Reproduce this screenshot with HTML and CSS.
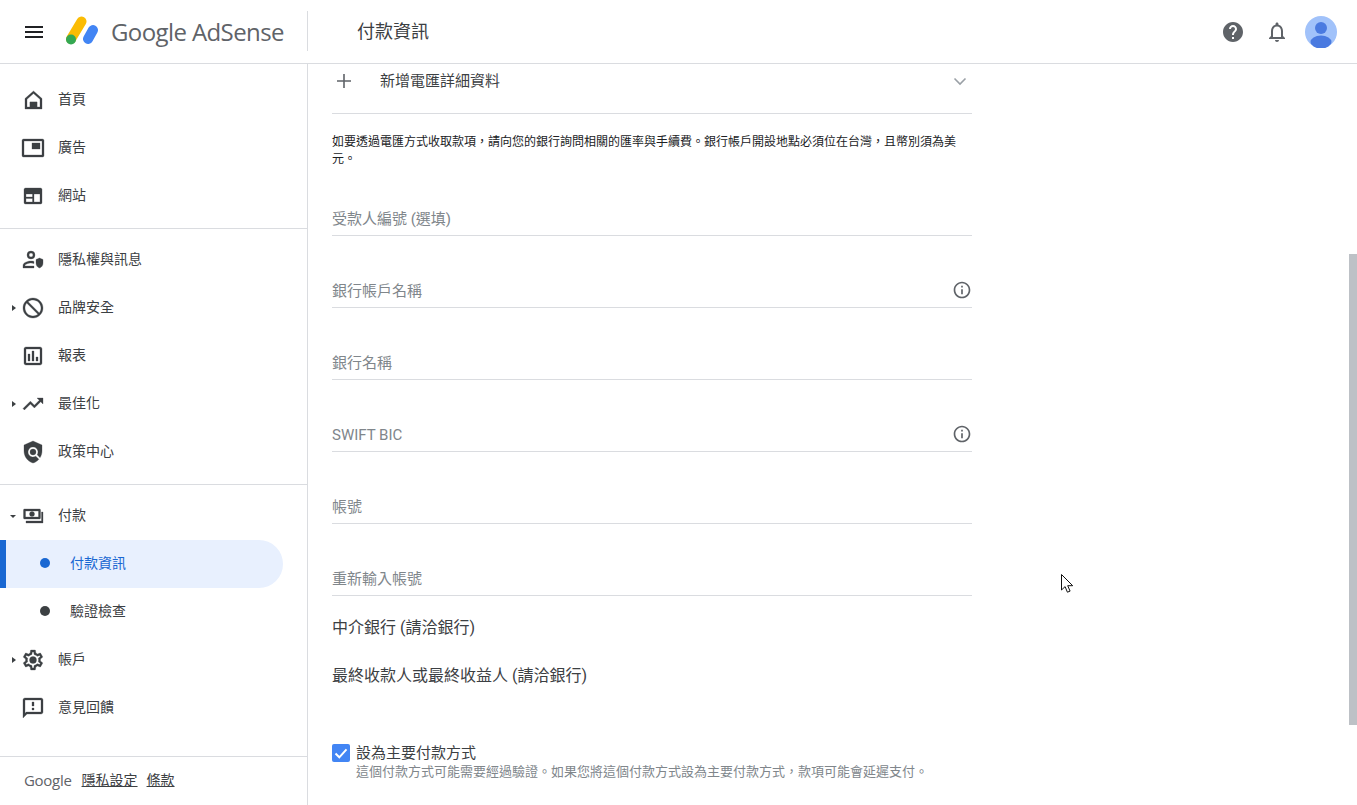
FILE: index.html
```html
<!DOCTYPE html>
<html lang="zh-Hant">
<head>
<meta charset="utf-8">
<title>付款資訊 - Google AdSense</title>
<link rel="stylesheet" href="styles.css">
</head>
<body>
<header class="topbar">
  <svg class="menu-icon" viewBox="0 0 24 24"><path d="M3 18h18v-2H3v2zm0-5h18v-2H3v2zm0-7v2h18V6H3z"/></svg>
  <svg class="logo-mark" viewBox="0 0 34 32">
    <line x1="16.5" y1="6.5" x2="6" y2="24" stroke="#fbbc04" stroke-width="10" stroke-linecap="round"/>
    <line x1="28" y1="15" x2="23" y2="24" stroke="#4285f4" stroke-width="10" stroke-linecap="round"/>
    <circle cx="6" cy="24.5" r="5" fill="#34a853"/>
  </svg>
  <span class="logo-text">Google AdSense</span>
  <div class="title-wrap"><h1 class="page-title">付款資訊</h1></div>
  <div class="top-actions">
    <svg class="top-icon" viewBox="0 0 24 24"><path d="M12 2C6.48 2 2 6.48 2 12s4.48 10 10 10 10-4.48 10-10S17.52 2 12 2zm1 17h-2v-2h2v2zm2.07-7.75l-.9.92C13.45 12.9 13 13.5 13 15h-2v-.5c0-1.1.45-2.1 1.17-2.83l1.24-1.26c.37-.36.59-.86.59-1.41 0-1.1-.9-2-2-2s-2 .9-2 2H8c0-2.21 1.79-4 4-4s4 1.79 4 4c0 .88-.36 1.68-.93 2.25z"/></svg>
    <svg class="top-icon" viewBox="0 0 24 24"><path d="M12 22c1.1 0 2-.9 2-2h-4c0 1.1.9 2 2 2zm6-6v-5c0-3.07-1.63-5.64-4.5-6.32V4c0-.83-.67-1.5-1.5-1.5s-1.5.67-1.5 1.5v.68C7.64 5.36 6 7.92 6 11v5l-2 2v1h16v-1l-2-2zm-2 1H8v-6c0-2.48 1.51-4.5 4-4.5s4 2.02 4 4.5v6z"/></svg>
    <svg class="avatar" viewBox="0 0 32 32"><circle cx="16" cy="16" r="16" fill="#a1c2fa"/><circle cx="16" cy="12" r="6" fill="#4a7ae0"/><ellipse cx="16" cy="26" rx="10.500" ry="6.500" fill="#4a7ae0"/></svg>
  </div>
</header>

<div class="shell">
  <aside class="sidebar">
    <nav class="nav">
      <div class="nav-group">
        <a class="nav-row"><span class="caret-slot"></span>
          <svg class="nav-icon" viewBox="0 0 24 24"><path fill-rule="evenodd" d="M12.500 3L4 10.500v10.500h17V10.500L12.500 3zm0 2.600l6.500 5.700V19h-3v-5H9v5H6v-7.700l6.500-5.700z"/><rect x="9" y="14" width="7" height="6"/></svg>
          <span class="nav-label">首頁</span></a>
        <a class="nav-row"><span class="caret-slot"></span>
          <svg class="nav-icon" viewBox="0 0 24 24"><path fill-rule="evenodd" d="M2.500 3h19A1.500 1.500 0 0 1 23 4.500v15a1.500 1.500 0 0 1-1.500 1.500h-19A1.500 1.500 0 0 1 1 19.500v-15A1.500 1.500 0 0 1 2.500 3zM3 5v14h18V5H3z"/><rect x="11" y="7" width="8" height="6"/></svg>
          <span class="nav-label">廣告</span></a>
        <a class="nav-row"><span class="caret-slot"></span>
          <svg class="nav-icon" viewBox="0 0 24 24"><path fill-rule="evenodd" d="M4.500 4h15A1.500 1.500 0 0 1 21 5.500v13a1.500 1.500 0 0 1-1.500 1.500h-15A1.500 1.500 0 0 1 3 18.500v-13A1.500 1.500 0 0 1 4.500 4zM5 10v3h6.500v-3H5zm8 0v8h6v-8h-6zM5 14.500V18h6.500v-3.500H5z"/></svg>
          <span class="nav-label">網站</span></a>
      </div>
      <div class="nav-group">
        <a class="nav-row"><span class="caret-slot"></span>
          <svg class="nav-icon" viewBox="0 0 24 24"><path fill-rule="evenodd" d="M10 3a4 4 0 1 1 0 8 4 4 0 0 1 0-8zm0 2a2 2 0 1 0 0 4 2 2 0 0 0 0-4zM2 20v-2.500C2 14.500 7 13 10 13c1 0 2 .1 3 .4v2.100c-1-.3-2-.5-3-.5-2.500 0-6 1.200-6 2.500v.5h9v2H2z"/><path d="M18.500 10l3.500 1.500v3.500c0 2.500-1.500 4.500-3.500 5-2-.5-3.500-2.500-3.500-5v-3.500l3.500-1.500z"/></svg>
          <span class="nav-label">隱私權與訊息</span></a>
        <a class="nav-row"><span class="caret-slot"><span class="caret-right"></span></span>
          <svg class="nav-icon" viewBox="0 0 24 24"><path transform="matrix(-1 0 0 1 24 0)" d="M12 2C6.480 2 2 6.480 2 12s4.480 10 10 10 10-4.480 10-10S17.520 2 12 2zM4 12c0-4.420 3.580-8 8-8 1.850 0 3.550.63 4.900 1.690L5.690 16.900C4.630 15.550 4 13.850 4 12zm8 8c-1.850 0-3.550-.63-4.900-1.690L18.310 7.100C19.370 8.450 20 10.150 20 12c0 4.420-3.580 8-8 8z"/></svg>
          <span class="nav-label">品牌安全</span></a>
        <a class="nav-row"><span class="caret-slot"></span>
          <svg class="nav-icon" viewBox="0 0 24 24"><path d="M19 3H5c-1.100 0-2 .9-2 2v14c0 1.100.9 2 2 2h14c1.100 0 2-.9 2-2V5c0-1.100-.9-2-2-2zm0 16H5V5h14v14zM7 10h2v7H7zm4-3h2v10h-2zm4 6h2v4h-2z"/></svg>
          <span class="nav-label">報表</span></a>
        <a class="nav-row"><span class="caret-slot"><span class="caret-right"></span></span>
          <svg class="nav-icon" viewBox="0 0 24 24"><path d="M16 6l2.290 2.290-4.880 4.880-4-4L2 16.590 3.410 18l6-6 4 4 6.300-6.290L22 12V6z"/></svg>
          <span class="nav-label">最佳化</span></a>
        <a class="nav-row"><span class="caret-slot"></span>
          <svg class="nav-icon" viewBox="0 0 24 24"><path d="M21 5l-9-4-9 4v6c0 5.550 3.840 10.740 9 12 2.300-.56 4.330-1.900 5.880-3.710l-3.120-3.120c-1.940 1.290-4.580 1.070-6.290-.64-1.950-1.950-1.950-5.120 0-7.070 1.950-1.950 5.120-1.950 7.070 0 1.710 1.710 1.920 4.350.64 6.290l2.900 2.900C20.290 15.690 21 13.380 21 11V5z"/><circle cx="12" cy="12" r="3"/></svg>
          <span class="nav-label">政策中心</span></a>
      </div>
      <div class="nav-group last">
        <a class="nav-row"><span class="caret-slot"><span class="caret-down"></span></span>
          <svg class="nav-icon" viewBox="0 0 24 24"><path fill-rule="evenodd" d="M3.500 5h15a1 1 0 0 1 1 1v8a1 1 0 0 1-1 1h-15a1 1 0 0 1-1-1V6a1 1 0 0 1 1-1zM4.500 7v6h13V7h-13z"/><path d="M20.500 8h1.500v11H5v-2h15.500z"/><circle cx="11" cy="10" r="2.500"/></svg>
          <span class="nav-label">付款</span></a>
        <a class="sub-row active"><span class="dot"></span><span class="sub-label">付款資訊</span></a>
        <a class="sub-row"><span class="dot"></span><span class="sub-label">驗證檢查</span></a>
        <a class="nav-row"><span class="caret-slot"><span class="caret-right"></span></span>
          <svg class="nav-icon" viewBox="0 0 24 24"><path d="M19.430 12.980c.04-.32.07-.64.07-.98 0-.34-.03-.66-.07-.98l2.110-1.650c.19-.15.24-.42.12-.64l-2-3.460c-.09-.16-.26-.25-.44-.25-.06 0-.12.01-.17.03l-2.490 1c-.52-.4-1.080-.73-1.690-.98l-.38-2.650C14.460 2.180 14.250 2 14 2h-4c-.25 0-.46.18-.49.42l-.38 2.650c-.61.25-1.170.59-1.690.98l-2.490-1c-.06-.02-.12-.03-.18-.03-.17 0-.34.09-.43.25l-2 3.460c-.13.22-.07.49.12.64l2.110 1.650c-.04.32-.07.65-.07.98 0 .33.03.66.07.98l-2.110 1.650c-.19.15-.24.42-.12.64l2 3.460c.09.16.26.25.44.25.06 0 .12-.01.17-.03l2.490-1c.52.4 1.080.73 1.690.98l.38 2.650c.03.24.24.42.49.42h4c.25 0 .46-.18.49-.42l.38-2.650c.61-.25 1.170-.59 1.690-.98l2.490 1c.06.02.12.03.18.03.17 0 .34-.09.43-.25l2-3.460c.12-.22.07-.49-.12-.64l-2.110-1.650zm-1.980-1.710c.04.31.05.52.05.73 0 .21-.02.43-.05.73l-.14 1.130.89.7 1.080.84-.7 1.210-1.270-.51-1.040-.42-.9.68c-.43.32-.84.56-1.250.73l-1.060.43-.16 1.130-.2 1.350h-1.400l-.19-1.350-.16-1.130-1.060-.43c-.43-.18-.83-.41-1.230-.71l-.91-.7-1.060.43-1.270.51-.7-1.210 1.080-.84.89-.7-.14-1.130c-.03-.31-.05-.54-.05-.74s.02-.43.05-.73l.14-1.130-.89-.7-1.080-.84.7-1.210 1.270.51 1.040.42.9-.68c.43-.32.84-.56 1.250-.73l1.060-.43.16-1.130.2-1.350h1.390l.19 1.350.16 1.130 1.060.43c.43.18.83.41 1.230.71l.91.7 1.060-.43 1.270-.51.7 1.210-1.070.85-.89.7.14 1.130z"/><circle cx="12" cy="12" r="3.500"/></svg>
          <span class="nav-label">帳戶</span></a>
        <a class="nav-row"><span class="caret-slot"></span>
          <svg class="nav-icon" viewBox="0 0 24 24"><path d="M20 2H4c-1.100 0-1.990.9-1.990 2L2 22l4-4h14c1.100 0 2-.9 2-2V4c0-1.100-.9-2-2-2zm0 14H5.170L4 17.170V4h16v12zM11 12h2v2h-2zm0-6h2v4h-2z"/></svg>
          <span class="nav-label">意見回饋</span></a>
      </div>
    </nav>
    <footer class="side-footer">
      <span class="footer-brand">Google</span>
      <a class="footer-link">隱私設定</a>
      <a class="footer-link">條款</a>
    </footer>
  </aside>

  <main class="main">
    <div class="panel-head">
      <svg class="plus-icon" viewBox="0 0 24 24"><path d="M5 12h14M12 5v14"/></svg>
      <span class="panel-title">新增電匯詳細資料</span>
      <svg class="chevron-icon" viewBox="0 0 24 24"><path d="M6.500 9.500l5.500 5.500 5.500-5.500"/></svg>
    </div>
    <p class="note">如要透過電匯方式收取款項，請向您的銀行詢問相關的匯率與手續費。銀行帳戶開設地點必須位在台灣，且幣別須為美元。</p>
    <div class="field first"><span>受款人編號 (選填)</span></div>
    <div class="field"><span>銀行帳戶名稱</span>
      <svg class="info-icon" viewBox="0 0 24 24"><path d="M11 7h2v2h-2zm0 4h2v6h-2zm1-9C6.480 2 2 6.480 2 12s4.480 10 10 10 10-4.480 10-10S17.520 2 12 2zm0 18c-4.410 0-8-3.590-8-8s3.590-8 8-8 8 3.590 8 8-3.590 8-8 8z"/></svg></div>
    <div class="field"><span>銀行名稱</span></div>
    <div class="field latin"><span>SWIFT BIC</span>
      <svg class="info-icon" viewBox="0 0 24 24"><path d="M11 7h2v2h-2zm0 4h2v6h-2zm1-9C6.480 2 2 6.480 2 12s4.480 10 10 10 10-4.480 10-10S17.520 2 12 2zm0 18c-4.410 0-8-3.590-8-8s3.590-8 8-8 8 3.590 8 8-3.590 8-8 8z"/></svg></div>
    <div class="field"><span>帳號</span></div>
    <div class="field"><span>重新輸入帳號</span></div>
    <div class="section-link first">中介銀行 (請洽銀行)</div>
    <div class="section-link">最終收款人或最終收益人 (請洽銀行)</div>
    <div class="check-row">
      <span class="checkbox"><svg viewBox="0 0 18 18"><path d="M3.500 9.500l3.800 3.800 7.200-8"/></svg></span>
      <div class="check-text">
        <div class="check-label">設為主要付款方式</div>
        <div class="check-sub">這個付款方式可能需要經過驗證。如果您將這個付款方式設為主要付款方式，款項可能會延遲支付。</div>
      </div>
    </div>
  </main>
</div>

<div class="scroll-thumb"></div>
<svg class="cursor" viewBox="0 0 13 20"><path d="M.5.5v15.500l3.600-3.400 2.300 5.600 2.700-1.100-2.400-5.400h5z" fill="#fff" stroke="#111" stroke-width="1"/></svg>
</body>
</html>
```

FILE: styles.css
```css
* { box-sizing: border-box; }
html, body { margin: 0; height: 100%; overflow: hidden; }
body {
  font-family: Roboto, "Noto Sans CJK TC", sans-serif;
  color: #3c4043;
  background: #fff;
  display: flex;
  flex-direction: column;
  height: 805px;
}
svg { display: block; flex: none; }

.topbar {
  flex: none;
  height: 64px;
  display: flex;
  align-items: center;
  border-bottom: 1px solid #dadce0;
  padding-left: 22px;
}
.menu-icon { width: 24px; height: 24px; fill: #202124; }
.logo-mark { width: 34px; height: 32px; margin-left: 19px; margin-top: -2px; }
.logo-text {
  font-family: "Open Sans", Roboto, sans-serif;
  font-size: 24px;
  color: #5f6368;
  margin-left: 12px;
  white-space: nowrap;
  width: 196px;
  letter-spacing: -0.6px;
}
.title-wrap {
  height: 40px;
  border-left: 1px solid #dadce0;
  display: flex;
  align-items: center;
  padding-left: 49px;
  margin-top: -1px;
}
.page-title { margin: 0 0 2px; font-size: 18px; font-weight: 400; color: #3c4043; }
.top-actions {
  margin-left: auto;
  display: flex;
  align-items: center;
  gap: 20px;
  padding-right: 20px;
}
.top-icon { width: 24px; height: 24px; fill: #5f6368; }
.avatar { width: 32px; height: 32px; margin-left: -4px; }

.shell { flex: 1; display: flex; min-height: 0; }
.sidebar {
  width: 308px;
  flex: none;
  border-right: 1px solid #dadce0;
  display: flex;
  flex-direction: column;
}
.nav { flex: 1; padding-top: 12px; }
.nav-group { border-bottom: 1px solid #dadce0; padding-bottom: 8px; margin-bottom: 7px; }
.nav-group.last { border-bottom: 0; margin: 0; padding: 0; }
.nav-row {
  display: flex;
  align-items: center;
  height: 48px;
  padding-left: 10px;
}
.caret-slot { width: 11px; flex: none; display: flex; align-items: center; }
.caret-right {
  margin-left: 2px;
  border-left: 4px solid #3c4043;
  border-top: 3px solid transparent;
  border-bottom: 3px solid transparent;
}
.caret-down {
  border-top: 3px solid #3c4043;
  border-left: 3px solid transparent;
  border-right: 3px solid transparent;
}
.nav-icon { width: 24px; height: 24px; fill: #3c4043; stroke: #3c4043; stroke-width: 0.3; }
.nav-label { margin: 0 0 4px 13px; font-size: 14px; }
.sub-row {
  display: flex;
  align-items: center;
  gap: 20px;
  height: 48px;
  width: 283px;
  padding-left: 40px;
  font-size: 14px;
}
.sub-label { margin-bottom: 4px; }
.sub-row .dot { width: 10px; height: 10px; border-radius: 50%; background: #3c4043; margin-bottom: 2px; }
.sub-row.active {
  color: #1967d2;
  background: #e8f0fe;
  border-left: 6px solid #1967d2;
  border-radius: 0 24px 24px 0;
  padding-left: 34px;
}
.sub-row.active .dot { background: #1967d2; }

.side-footer {
  flex: none;
  height: 49px;
  border-top: 1px solid #dadce0;
  display: flex;
  align-items: center;
  padding-left: 24px;
  font-size: 14px;
}
.footer-brand {
  font-family: "Open Sans", Roboto, sans-serif;
  font-size: 15px;
  letter-spacing: -0.3px;
  color: #5f6368;
  margin: 0 10px 2px 0;
}
.footer-link { text-decoration: underline; margin: 0 9px 4px 0; }

.main { flex: 1; padding-left: 24px; overflow: hidden; }
.main > * { width: 640px; }
.panel-head {
  display: flex;
  align-items: flex-start;
  height: 50px;
  padding-top: 5px;
  border-bottom: 1px solid #dadce0;
}
.plus-icon { width: 24px; height: 24px; fill: none; stroke: #5f6368; stroke-width: 1.6; }
.panel-title { margin-left: 24px; font-size: 15px; line-height: 24px; }
.chevron-icon { width: 24px; height: 24px; margin-left: auto; fill: none; stroke: #9aa0a6; stroke-width: 1.6; }
.note { margin: 20px 0 0; font-size: 12px; line-height: 17px; color: #202124; font-family: Roboto, "Noto Sans CJK SC", sans-serif; }
.field {
  height: 36px;
  margin-top: 36px;
  border-bottom: 1px solid #dadce0;
  display: flex;
  align-items: center;
  justify-content: space-between;
  font-size: 15px;
  color: #80868b;
}
.field.first { margin-top: 32px; }
.field.latin span { margin-top: 2px; }
.info-icon { width: 20px; height: 20px; fill: #5f6368; }
.section-link { font-size: 16px; line-height: 48px; color: #3c4043; }
.section-link.first { margin-top: 8px; }
.check-row { display: flex; gap: 6px; margin-top: 44px; }
.checkbox { width: 18px; height: 18px; border-radius: 2px; background: #4285f4; flex: none; }
.checkbox svg { width: 18px; height: 18px; fill: none; stroke: #fff; stroke-width: 2; }
.check-label { font-size: 15px; line-height: 18px; color: #3c4043; }
.check-sub { font-size: 13px; line-height: 20px; color: #80868b; font-family: Roboto, "Noto Sans CJK SC", sans-serif; }

.scroll-thumb {
  position: absolute;
  left: 1349px;
  top: 254px;
  width: 8px;
  height: 471px;
  background: #bdc1c6;
}
.cursor { position: absolute; left: 1061px; top: 574px; width: 13px; height: 20px; }
```
